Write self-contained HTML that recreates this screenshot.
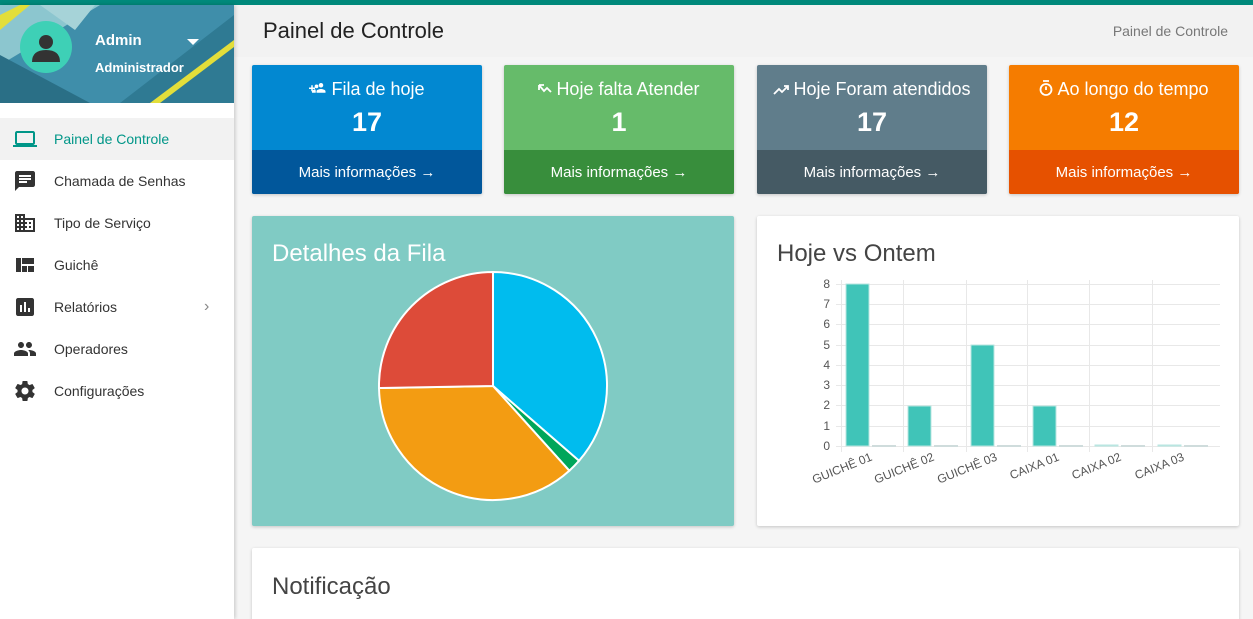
<!DOCTYPE html>
<html><head><meta charset="utf-8"><style>
*{box-sizing:border-box;margin:0;padding:0}
html,body{width:1253px;height:619px;overflow:hidden}
body{background:#f5f5f5;font-family:"Liberation Sans",Roboto,sans-serif;position:relative}
.topbar{position:absolute;left:0;top:0;width:1253px;height:5px;background:#00897b}
.side{position:absolute;left:0;top:5px;width:234px;height:614px;background:#fff;box-shadow:1px 0 4px rgba(0,0,0,.2)}
.prof{position:absolute;left:0;top:0;width:234px;height:98px;overflow:hidden;background:#3d8ca6}
.nav{position:absolute;left:0;top:113px;width:234px}
.nav div{height:42px;display:flex;align-items:center;font-size:14px;color:#333;position:relative}
.nav div svg{position:absolute;left:13px}
.nav div span{position:absolute;left:54px}
.nav .act{background:#f2f2f2;color:#009688}
.hdr{position:absolute;left:234px;top:5px;width:1019px;height:52px;background:#f2f2f2}
.card{position:absolute;top:65px;width:230px;height:129px;border-radius:2px;box-shadow:0 1px 3px rgba(0,0,0,.2);color:#fff;overflow:hidden}
.card .t{position:absolute;top:14px;width:100%;text-align:center;font-size:18px}
.card .t svg{vertical-align:-1px;margin-right:4px}
.card .n{position:absolute;top:42px;width:100%;text-align:center;font-size:27px;font-weight:bold}
.card .b{position:absolute;top:85px;height:44px;width:100%;text-align:center;font-size:15px;line-height:46px}
.panel{position:absolute;box-shadow:0 1px 3px rgba(0,0,0,.2);border-radius:2px}
.panel h2{position:absolute;left:20px;font-weight:normal;font-size:24px}
</style></head><body>
<div class="topbar"></div>
<div class="hdr"><div style="position:absolute;left:29px;top:13px;font-size:22px;color:#222">Painel de Controle</div><div style="position:absolute;right:25px;top:18px;font-size:14px;color:#777">Painel de Controle</div></div>
<div class="side">
<div class="prof"><svg width="234" height="98" style="position:absolute;left:0;top:0">
<rect width="234" height="98" fill="#3f8eaa"/>
<polygon points="0,0 100,0 0,60" fill="#8cc6cf"/>
<polygon points="40,0 95,0 75,25" fill="#a6d3d8"/>
<polygon points="0,50 90,98 0,98" fill="#2a6f86"/>
<polygon points="120,98 234,10 234,98" fill="#2f7a93"/>
<polygon points="150,98 234,35 234,42 160,98" fill="#e3de3a"/>
<polygon points="0,10 20,0 30,0 0,25" fill="#e3de3a"/>
</svg>
<div style="position:absolute;left:20px;top:16px;width:52px;height:52px;border-radius:50%;background:#3ed0b6"></div>
<svg width="52" height="52" style="position:absolute;left:20px;top:16px"><circle cx="26" cy="21" r="7" fill="#333"/><path d="M12 41 q0-12 14-12 q14 0 14 12z" fill="#333"/></svg>
<div style="position:absolute;left:95px;top:27px;color:#fff;font-size:15px;font-weight:bold">Admin</div>
<div style="position:absolute;left:95px;top:55px;color:#fff;font-size:13px;font-weight:bold">Administrador</div>
<div style="position:absolute;left:187px;top:34px;border:6px solid transparent;border-top-color:#fff;border-bottom:0"></div>
</div>
<div class="nav">
<div class="act"><svg width="24" height="24" viewBox="0 0 24 24"><path fill="#009688" d="M20 18c1.1 0 2-.9 2-2V6c0-1.1-.9-2-2-2H4c-1.1 0-2 .9-2 2v10c0 1.1.9 2 2 2H0v2h24v-2h-4zM4 6h16v10H4V6z"/></svg><span>Painel de Controle</span></div>
<div><svg width="24" height="24" viewBox="0 0 24 24"><path fill="#333" d="M20 2H4c-1.1 0-2 .9-2 2v18l4-4h14c1.1 0 2-.9 2-2V4c0-1.1-.9-2-2-2zM6 9h12v2H6V9zm8 5H6v-2h8v2zm4-6H6V6h12v2z"/></svg><span>Chamada de Senhas</span></div>
<div><svg width="24" height="24" viewBox="0 0 24 24"><path fill="#333" d="M12 7V3H2v18h20V7H12zM6 19H4v-2h2v2zm0-4H4v-2h2v2zm0-4H4V9h2v2zm0-4H4V5h2v2zm4 12H8v-2h2v2zm0-4H8v-2h2v2zm0-4H8V9h2v2zm0-4H8V5h2v2zm10 12h-8v-2h2v-2h-2v-2h2v-2h-2V9h8v10zm-2-8h-2v2h2v-2zm0 4h-2v2h2v-2z"/></svg><span>Tipo de Serviço</span></div>
<div><svg width="24" height="24" viewBox="0 0 24 24"><path fill="#333" d="M3 5v14h5V5H3zm6 0v6h12V5H9zm0 8v6h5v-6H9zm6 0v6h6v-6h-6z"/></svg><span>Guichê</span></div>
<div><svg width="24" height="24" viewBox="0 0 24 24"><path fill="#333" d="M19 3H5c-1.1 0-2 .9-2 2v14c0 1.1.9 2 2 2h14c1.1 0 2-.9 2-2V5c0-1.1-.9-2-2-2zM9 17H7v-7h2v7zm4 0h-2V7h2v10zm4 0h-2v-4h2v4z"/></svg><span>Relatórios</span><b style="position:absolute;left:204px;color:#888;font-weight:normal;font-size:16px">›</b></div>
<div><svg width="24" height="24" viewBox="0 0 24 24"><path fill="#333" d="M16 11c1.66 0 2.99-1.34 2.99-3S17.66 5 16 5c-1.66 0-3 1.340-3 3s1.34 3 3 3zm-8 0c1.66 0 2.99-1.34 2.99-3S9.66 5 8 5C6.34 5 5 6.34 5 8s1.34 3 3 3zm0 2c-2.33 0-7 1.170-7 3.5V19h14v-2.5c0-2.33-4.67-3.5-7-3.5zm8 0c-.29 0-.62.02-.97.05 1.16.84 1.97 1.97 1.97 3.45V19h6v-2.5c0-2.33-4.67-3.5-7-3.5z"/></svg><span>Operadores</span></div>
<div><svg width="24" height="24" viewBox="0 0 24 24"><path fill="#333" d="M19.4 13c.04-.3.06-.6.06-1s-.02-.7-.06-1l2.1-1.6c.2-.15.24-.42.12-.64l-2-3.46c-.12-.22-.39-.3-.61-.22l-2.5 1c-.52-.4-1.080-.73-1.69-.98l-.38-2.65A.49.49 0 0 0 14 2h-4c-.25 0-.46.18-.49.42l-.38 2.65c-.61.25-1.17.59-1.69.98l-2.49-1c-.23-.09-.49 0-.61.22l-2 3.46c-.13.22-.07.49.12.64L4.57 11c-.04.32-.07.65-.07 1s.03.68.07 1l-2.11 1.65c-.19.15-.24.42-.12.64l2 3.46c.12.22.39.3.61.22l2.49-1c.52.4 1.08.73 1.69.98l.38 2.65c.03.24.24.42.49.42h4c.25 0 .46-.18.49-.42l.38-2.65c.61-.25 1.17-.59 1.69-.98l2.49 1c.23.09.49 0 .61-.22l2-3.46c.12-.22.07-.49-.12-.64L19.4 13zM12 15.5c-1.93 0-3.5-1.57-3.5-3.5s1.57-3.5 3.5-3.5 3.5 1.57 3.5 3.5-1.57 3.5-3.5 3.5z"/></svg><span>Configurações</span></div>
</div>
</div>

<div class="card" style="left:252px;background:#0288d1"><div class="t"><svg width="18" height="14" viewBox="0 0 24 18"><path fill="#fff" d="M0 7h3V4h2v3h3v2H5v3H3V9H0zM16 7a3 3 0 1 0 0-6 3 3 0 0 0 0 6zm-6 1a2.5 2.5 0 1 0 0-5 2.5 2.5 0 0 0 0 5zm6 1c-2 0-6 1-6 3v2h12v-2c0-2-4-3-6-3zm-6 0c-.5 0-1.500.1-2.300.3C8.800 10 9 11 9 12v2H4v-1.500C4 10.500 8 9 10 9z"/></svg>Fila de hoje</div><div class="n">17</div><div class="b" style="background:#01579b">Mais informações →</div></div>
<div class="card" style="left:504px;background:#66bb6a"><div class="t"><svg width="14" height="12" viewBox="0 0 14 12"><path d="M1 1v5M1 1h5M1 1l5 6 3-3 4 4" stroke="#fff" stroke-width="1.8" fill="none"/></svg>Hoje falta Atender</div><div class="n">1</div><div class="b" style="background:#388e3c">Mais informações →</div></div>
<div class="card" style="left:757px;background:#607d8b"><div class="t"><svg width="16" height="12" viewBox="0 0 16 12"><path d="M1 10l5-5 3 3 6-6M11 2h4v4" stroke="#fff" stroke-width="1.8" fill="none"/></svg>Hoje Foram atendidos</div><div class="n">17</div><div class="b" style="background:#455a64">Mais informações →</div></div>
<div class="card" style="left:1009px;background:#f57c00"><div class="t"><svg width="14" height="16" viewBox="0 0 14 16"><path d="M4 1h6" stroke="#fff" stroke-width="1.8"/><circle cx="7" cy="9.5" r="5.5" stroke="#fff" stroke-width="1.8" fill="none"/><path d="M7 6.5v3.5" stroke="#fff" stroke-width="1.8"/></svg>Ao longo do tempo</div><div class="n">12</div><div class="b" style="background:#e65100">Mais informações →</div></div>

<div class="panel" style="left:252px;top:216px;width:482px;height:310px;background:#80cbc4"><h2 style="top:24px;color:#fff">Detalhes da Fila</h2></div>
<svg width="1253" height="619" style="position:absolute;left:0;top:0">
<g stroke="#fff" stroke-width="2">
<path d="M493 386 L493 272 A114 114 0 0 1 579 460.8Z" fill="#00bcee"/>
<path d="M493 386 L579 460.8 A114 114 0 0 1 569.3 470.7Z" fill="#00a65a"/>
<path d="M493 386 L569.3 470.7 A114 114 0 0 1 379 388Z" fill="#f39c12"/>
<path d="M493 386 L379 388 A114 114 0 0 1 493 272Z" fill="#dd4b39"/>
</g>
</svg>

<div class="panel" style="left:757px;top:216px;width:482px;height:310px;background:#fff"><h2 style="top:24px;color:#444">Hoje vs Ontem</h2></div>
<svg width="1253" height="619" style="position:absolute;left:0;top:0;font-family:'Liberation Sans',sans-serif">
<g stroke="#e8e8e8" stroke-width="1">
<line x1="836" y1="284.5" x2="1220" y2="284.5"/><line x1="836" y1="304.5" x2="1220" y2="304.5"/><line x1="836" y1="324.5" x2="1220" y2="324.5"/><line x1="836" y1="345.5" x2="1220" y2="345.5"/><line x1="836" y1="365.5" x2="1220" y2="365.5"/><line x1="836" y1="385.5" x2="1220" y2="385.5"/><line x1="836" y1="405.5" x2="1220" y2="405.5"/><line x1="836" y1="426.5" x2="1220" y2="426.5"/><line x1="836" y1="446.5" x2="1220" y2="446.5"/>
<line x1="841.5" y1="280" x2="841.5" y2="452"/><line x1="903.5" y1="280" x2="903.5" y2="452"/><line x1="966.5" y1="280" x2="966.5" y2="452"/><line x1="1027.5" y1="280" x2="1027.5" y2="452"/><line x1="1089.5" y1="280" x2="1089.5" y2="452"/><line x1="1152.5" y1="280" x2="1152.5" y2="452"/>
</g>
<g fill="#555" font-size="12" text-anchor="end"><text x="830" y="288">8</text><text x="830" y="308">7</text><text x="830" y="328">6</text><text x="830" y="349">5</text><text x="830" y="369">4</text><text x="830" y="389">3</text><text x="830" y="409">2</text><text x="830" y="430">1</text><text x="830" y="450">0</text></g>
<g fill="#40c4b8" stroke="#b9e6e1" stroke-width="1">
<rect x="846" y="284" width="23" height="162"/><rect x="908" y="406" width="23" height="40"/><rect x="971" y="345" width="23" height="101"/><rect x="1033" y="406" width="23" height="40"/><rect x="1095" y="445" width="23" height="1"/><rect x="1158" y="445" width="23" height="1"/>
</g>
<g fill="#cfdcdc"><rect x="872" y="445" width="24" height="2"/><rect x="934" y="445" width="24" height="2"/><rect x="997" y="445" width="24" height="2"/><rect x="1059" y="445" width="24" height="2"/><rect x="1121" y="445" width="24" height="2"/><rect x="1184" y="445" width="24" height="2"/></g>
<g fill="#555" font-size="12" text-anchor="end">
<text transform="translate(873,460) rotate(-22)">GUICHÊ 01</text>
<text transform="translate(935,460) rotate(-22)">GUICHÊ 02</text>
<text transform="translate(998,460) rotate(-22)">GUICHÊ 03</text>
<text transform="translate(1060,460) rotate(-22)">CAIXA 01</text>
<text transform="translate(1122,460) rotate(-22)">CAIXA 02</text>
<text transform="translate(1185,460) rotate(-22)">CAIXA 03</text>
</g>
</svg>

<div class="panel" style="left:252px;top:548px;width:987px;height:80px;background:#fff"><h2 style="top:25px;color:#444">Notificação</h2></div>
</body></html>
